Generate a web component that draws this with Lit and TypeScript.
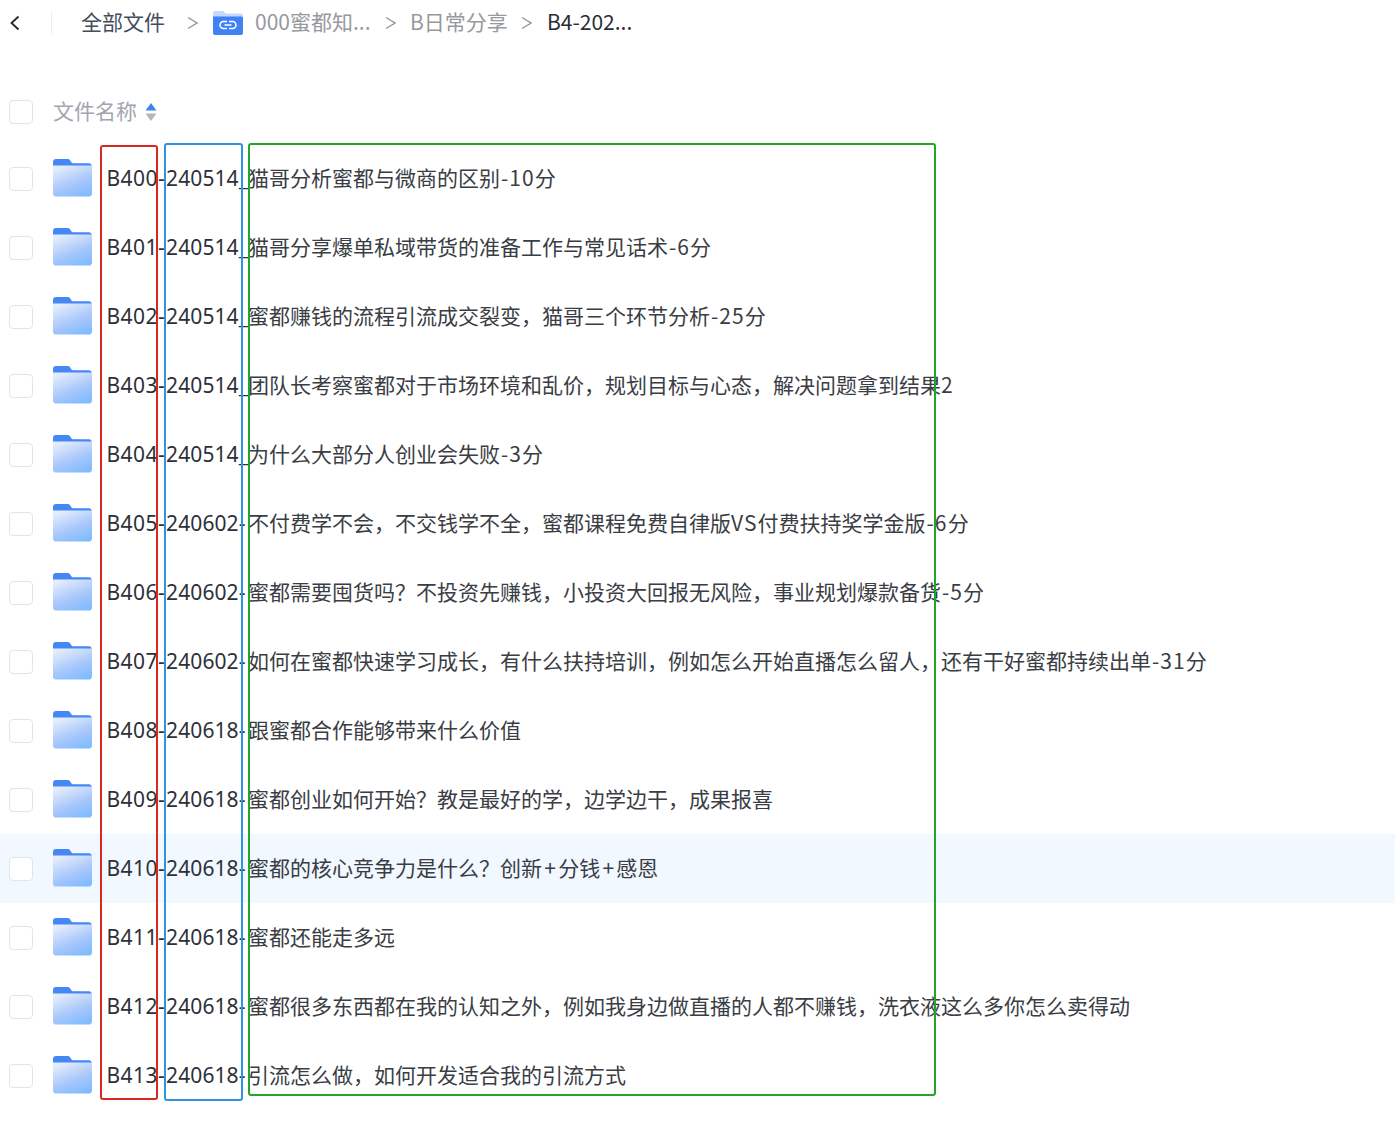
import { LitElement, html, css, svg } from "lit";
import { customElement } from "lit/decorators.js";

const rows: [string, string, string, string][] = [
  ["B400", "240514", "_", "猫哥分析蜜都与微商的区别-10分"],
  ["B401", "240514", "_", "猫哥分享爆单私域带货的准备工作与常见话术-6分"],
  ["B402", "240514", "_", "蜜都赚钱的流程引流成交裂变，猫哥三个环节分析-25分"],
  ["B403", "240514", "_", "团队长考察蜜都对于市场环境和乱价，规划目标与心态，解决问题拿到结果2"],
  ["B404", "240514", "_", "为什么大部分人创业会失败-3分"],
  ["B405", "240602", "-", "不付费学不会，不交钱学不全，蜜都课程免费自律版VS付费扶持奖学金版-6分"],
  ["B406", "240602", "-", "蜜都需要囤货吗？不投资先赚钱，小投资大回报无风险，事业规划爆款备货-5分"],
  ["B407", "240602", "-", "如何在蜜都快速学习成长，有什么扶持培训，例如怎么开始直播怎么留人，还有干好蜜都持续出单-31分"],
  ["B408", "240618", "-", "跟蜜都合作能够带来什么价值"],
  ["B409", "240618", "-", "蜜都创业如何开始？教是最好的学，边学边干，成果报喜"],
  ["B410", "240618", "-", "蜜都的核心竞争力是什么？创新+分钱+感恩"],
  ["B411", "240618", "-", "蜜都还能走多远"],
  ["B412", "240618", "-", "蜜都很多东西都在我的认知之外，例如我身边做直播的人都不赚钱，洗衣液这么多你怎么卖得动"],
  ["B413", "240618", "-", "引流怎么做，如何开发适合我的引流方式"],
];

const runs = (text: string) =>
  text.split(/([-+]|[A-Za-z0-9]+)/).map((part) => {
    if (part === "-") return html`<span class="hy">-</span>`;
    if (part === "+") return html`<span class="pl">+</span>`;
    if (/^[A-Za-z0-9]+$/.test(part)) return html`<span class="lat">${part}</span>`;
    return part;
  });

const folder = (i: number) => svg`
  <svg class="folder" width="39" height="38" viewBox="0 0 39 38">
    <defs>
      <linearGradient id="fg${i}" x1="0.25" y1="0" x2="0.75" y2="1">
        <stop offset="0" stop-color="#e4edfc"/>
        <stop offset="0.6" stop-color="#a6c6fb"/>
        <stop offset="1" stop-color="#80bcff"/>
      </linearGradient>
    </defs>
    <path d="M3 0H14.5C15.6 0 16.4 .5 17 1.3L18.5 3.5C18.8 4 19.3 4.2 20 4.2H36C37.6 4.2 38.6 5.2 38.6 6.6V14H0V3C0 1.2 1.2 0 3 0Z" fill="#4487f5"/>
    <path d="M0 6.5H38.6C38.8 6.5 39 6.8 39 7V34.5C39 36.4 37.6 37.6 36 37.6H3C1.3 37.6 0 36.4 0 34.5Z" fill="url(#fg${i})"/>
  </svg>`;

@customElement("app-root")
export class AppRoot extends LitElement {
  static styles = css`
    :host {
      display: block;
      position: relative;
      width: 1395px;
      height: 1132px;
      background: #fff;
      overflow: hidden;
      font-family: "Noto Sans CJK SC", "Noto Sans", sans-serif;
      font-size: 21px;
      color: #2d3038;
    }
    .crumbs {
      display: flex;
      align-items: center;
      height: 46px;
      font-size: 21px;
      white-space: nowrap;
    }
    .back { margin-left: 8px; width: 13px; height: 18px; display: block; }
    .divider { width: 1px; height: 24px; background: #eceef1; margin-left: 30px; }
    .all { margin-left: 29px; color: #454d5c; width: 84px; padding-bottom: 4px; }
    .sep { display: block; flex: none; }
    .s1 { margin-left: 22px; }
    .s2 { margin-left: 15px; }
    .s3 { margin-left: 14px; }
    .link { margin-left: 15px; display: block; margin-top: -1px; }
    .muted { color: #97999e; padding-bottom: 4px; }
    .m1 { margin-left: 12px; width: 115px; }
    .m2 { margin-left: 14px; width: 97px; }
    .cur { margin-left: 15px; color: #2b2d33; padding-bottom: 4px; }
    .head {
      display: flex;
      align-items: center;
      height: 64px;
      margin-top: 34px;
      padding-left: 9px;
    }
    .check {
      box-sizing: border-box;
      width: 24px;
      height: 24px;
      border: 1.5px solid #e3e4e6;
      border-radius: 4px;
      background: #fff;
      flex: none;
    }
    .title { margin-left: 20px; color: #a2a5b0; padding-bottom: 5px; }
    .sort { margin-left: 8px; display: block; }
    .row {
      display: flex;
      align-items: center;
      height: 69px;
      padding-left: 9px;
      white-space: nowrap;
    }
    .row.hot { background: #f1f8ff; }
    .folder { margin-left: 20px; margin-right: 14.5px; flex: none; display: block; margin-top: -1px; }
    .code {
      font-family: "Noto Sans", "Noto Sans CJK SC", sans-serif;
      width: 141.5px;
      flex: none;
      color: #2d3038;
      padding-bottom: 2px;
    }
    .c1 { letter-spacing: 0.42px; }
    .c2 { letter-spacing: 1.4px; }
    .c3 { letter-spacing: 0.1px; }
    .name { color: #3a3d44; padding-bottom: 4px; }
    .lat { letter-spacing: 1.1px; }
    .hy { padding: 0 1px; }
    .pl { padding: 0 2.25px; }
    .box {
      position: absolute;
      box-sizing: border-box;
      border: 2px solid;
      border-radius: 3px;
      pointer-events: none;
    }
    .red { left: 100px; top: 145px; width: 58px; height: 955px; border-color: #d9281e; }
    .blue { left: 164px; top: 143px; width: 79px; height: 958px; border-color: #2f94e0; }
    .green { left: 248px; top: 143px; width: 688px; height: 953px; border-color: #22a52b; }
  `;

  renderSep(cls: string) {
    return html`<svg class="sep ${cls}" width="11" height="14" viewBox="0 0 11 14"><path d="M1 1.5 10 7 1 12.5" fill="none" stroke="#8f949c" stroke-width="1.3"/></svg>`;
  }

  render() {
    return html`
      <nav class="crumbs">
        <svg class="back" viewBox="0 0 13 18"><path d="M10.5 2.5 3.5 9l7 6.5" fill="none" stroke="#23262c" stroke-width="1.8"/></svg>
        <span class="divider"></span>
        <span class="all">全部文件</span>
        ${this.renderSep("s1")}
        <svg class="link" width="30" height="24" viewBox="0 0 30 24">
          <path d="M2 0H10L13 2.5H28C29 2.5 30 3.5 30 4.5V8H0V2C0 1 1 0 2 0Z" fill="#c4d9fb"/>
          <path d="M0 5.5H28C29 5.5 30 6.2 30 7V22C30 23.2 29 24 28 24H2C1 24 0 23.2 0 22Z" fill="#3f82f5"/>
          <path d="M14 10.5H10.5A3.5 3.5 0 0 0 10.5 17.5H14M16 10.5H19.5A3.5 3.5 0 0 1 19.5 17.5H16M11.5 14H18.5" fill="none" stroke="#fff" stroke-width="1.5"/>
        </svg>
        <span class="muted m1">000蜜都知...</span>
        ${this.renderSep("s2")}
        <span class="muted m2">B日常分享</span>
        ${this.renderSep("s3")}
        <span class="cur">B4-202...</span>
      </nav>
      <div class="head">
        <span class="check"></span>
        <span class="title">文件名称</span>
        <svg class="sort" width="12" height="20" viewBox="0 0 12 20">
          <path d="M6 1 11.5 8.5H.5Z" fill="#3f82f5"/>
          <path d="M6 19 11.5 11.5H.5Z" fill="#b4b6bb"/>
        </svg>
      </div>
      ${rows.map(
        ([id, date, tail, name], i) => html`
          <div class="row ${i === 10 ? "hot" : ""}">
            <span class="check"></span>
            ${folder(i)}
            <span class="code"><span class="c1">${id}</span><span class="c2">-</span><span class="c3">${date}</span>${tail}</span>
            <span class="name">${runs(name)}</span>
          </div>
        `
      )}
      <div class="box red"></div>
      <div class="box blue"></div>
      <div class="box green"></div>
    `;
  }
}
